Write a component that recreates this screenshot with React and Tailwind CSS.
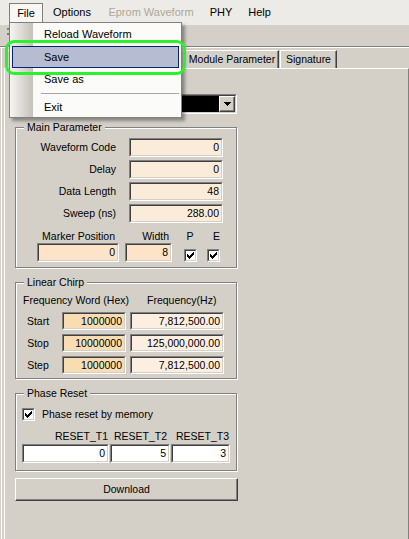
import React from "react";

function Field({ className = "", bg = "bg-white", children }) {
  return (
    <div className={`border border-t-[#808080] border-l-[#808080] border-b-white border-r-white ${className}`}>
      <div className={`h-full border border-t-[#404040] border-l-[#404040] border-b-[#d4d0c8] border-r-[#d4d0c8] ${bg} flex items-center justify-end pr-[2px] text-[10.5px] leading-none`}>
        {children}
      </div>
    </div>
  );
}

function Check({ className = "" }) {
  return (
    <div className={`w-[13px] h-[13px] border border-t-[#808080] border-l-[#808080] border-b-white border-r-white ${className}`}>
      <div className="w-full h-full border border-t-[#404040] border-l-[#404040] border-b-[#d4d0c8] border-r-[#d4d0c8] bg-white flex items-center justify-center">
        <svg width="7" height="7" viewBox="0 0 7 7" shapeRendering="crispEdges">
          <path
            d="M6 0h1v1h-1z M5 1h2v1h-2z M0 2h1v1h-1z M4 2h3v1h-3z M0 3h2v1h-2z M3 3h3v1h-3z M0 4h5v1h-5z M1 5h3v1h-3z M2 6h1v1h-1z"
            fill="#000"
          />
        </svg>
      </div>
    </div>
  );
}

function Group({ title, className = "", children }) {
  return (
    <fieldset className={`w-[222px] border border-[#808080] shadow-[1px_1px_0_#fff,inset_1px_1px_0_#fff] ${className}`}>
      <legend className="ml-[8px] px-[3px] bg-[#d4d0c8] text-[10.5px] leading-[13px]">{title}</legend>
      {children}
    </fieldset>
  );
}

function Row({ label, value }) {
  return (
    <div className="flex items-center">
      <div className="w-[100px] text-right text-[10.5px] leading-[13px]">{label}</div>
      <Field className="ml-[13px] w-[94px] h-[19px]" bg="bg-[#fbecda]">
        {value}
      </Field>
    </div>
  );
}

function ChirpRow({ label, hex, hz }) {
  return (
    <div className="flex items-center">
      <div className="w-[44px] text-center text-[10.5px] leading-[13px]">{label}</div>
      <Field className="ml-[2px] w-[64px] h-[18px]" bg="bg-[#f8ddb3]">
        {hex}
      </Field>
      <Field className="ml-[4px] w-[94px] h-[18px]" bg="bg-[#fcefe2]">
        {hz}
      </Field>
    </div>
  );
}

export default function App() {
  return (
    <div className="w-[409px] h-[539px] bg-[#d4d0c8] relative overflow-hidden flex flex-col font-[Liberation_Sans,Arial,sans-serif] text-black">
      {/* Menu bar */}
      <div className="h-[25px] shrink-0 bg-[#ecebe7] flex items-start pl-[9px] pt-[3px] text-[11px]">
        <div className="w-[34px] h-[19px] flex items-center justify-center border border-b-0 border-[#808080] bg-[#f8f7f4]">File</div>
        <div className="w-[58px] h-[19px] flex items-center justify-center">Options</div>
        <div className="w-[100px] h-[19px] flex items-center justify-center text-[#aca899]">Eprom Waveform</div>
        <div className="w-[40px] h-[19px] flex items-center justify-center">PHY</div>
        <div className="w-[37px] h-[19px] flex items-center justify-center">Help</div>
      </div>

      {/* Toolbar row */}
      <div className="h-[23px] shrink-0 border-b border-white shadow-[inset_0_-1px_0_#808080] flex flex-col pl-[7px] pt-[3px] gap-[3px]">
        <div className="w-[2px] h-[2px] bg-[#808080]" />
        <div className="w-[2px] h-[2px] bg-[#808080]" />
      </div>

      {/* Tab area */}
      <div className="flex-1 flex flex-col border-l border-white ml-[1px]">
        <div className="h-[20px] shrink-0 flex items-end pl-[3px] text-[10.5px]">
          <div className="w-[180px] h-[18px] border-t border-l border-white border-r border-r-[#404040] shadow-[inset_-1px_0_0_#808080]" />
          <div className="w-[94px] h-[18px] border-t border-l border-white border-r border-r-[#404040] shadow-[inset_-1px_0_0_#808080] flex items-center justify-center">
            Module Parameter
          </div>
          <div className="ml-[1px] w-[57px] h-[18px] border-t border-l border-white border-r border-r-[#404040] shadow-[inset_-1px_0_0_#808080] flex items-center justify-center">
            Signature
          </div>
        </div>

        {/* Tab panel */}
        <div className="flex-1 ml-[2px] border-l border-t border-white border-r border-r-[#808080] pl-[10px] pt-[25px] flex flex-col items-start">
          {/* Combo */}
          <div className="w-[222px] h-[20px] border border-t-[#808080] border-l-[#808080] border-b-white border-r-white">
            <div className="h-full border border-t-[#404040] border-l-[#404040] border-b-[#d4d0c8] border-r-[#d4d0c8] bg-black flex justify-end">
              <div className="w-[16px] h-full bg-[#d4d0c8] border border-t-white border-l-white border-b-[#404040] border-r-[#404040] shadow-[inset_-1px_-1px_0_#808080] flex items-center justify-center">
                <svg width="7" height="4" viewBox="0 0 7 4" shapeRendering="crispEdges">
                  <path d="M0 0h7v1h-7z M1 1h5v1h-5z M2 2h3v1h-3z M3 3h1v1h-1z" fill="#000" />
                </svg>
              </div>
            </div>
          </div>

          {/* Main Parameter */}
          <Group title="Main Parameter" className="mt-[7px] pt-[4px] pb-[5px]">
            <div className="flex flex-col gap-[3px]">
              <Row label="Waveform Code" value="0" />
              <Row label="Delay" value="0" />
              <Row label="Data Length" value="48" />
              <Row label="Sweep (ns)" value="288.00" />
            </div>
            <div className="mt-[7px] flex text-[10.5px] leading-[13px]">
              <div className="ml-[21px] w-[82px] flex flex-col">
                <div className="h-[13px] text-right pr-[4px]">Marker Position</div>
                <Field className="w-[82px] h-[19px]" bg="bg-[#fde4c8]">0</Field>
              </div>
              <div className="ml-[6px] w-[47px] flex flex-col">
                <div className="h-[13px] text-right pr-[3px]">Width</div>
                <Field className="w-[47px] h-[19px]" bg="bg-[#fde4c8]">8</Field>
              </div>
              <div className="ml-[6px] w-[24px] flex flex-col items-center">
                <div className="h-[13px]">P</div>
                <div className="h-[19px] flex items-end">
                  <Check />
                </div>
              </div>
              <div className="ml-[5px] w-[13px] flex flex-col">
                <div className="h-[13px] text-right">E</div>
                <div className="h-[19px] flex items-end">
                  <Check />
                </div>
              </div>
            </div>
          </Group>

          {/* Linear Chirp */}
          <Group title="Linear Chirp" className="mt-[8px] pt-[5px] pb-[4px]">
            <div className="h-[13px] flex text-[10.5px] leading-[13px]">
              <div className="ml-[7px]">Frequency Word (Hex)</div>
              <div className="ml-[18px]">Frequency(Hz)</div>
            </div>
            <div className="mt-[5px] flex flex-col gap-[4px]">
              <ChirpRow label="Start" hex="1000000" hz="7,812,500.00" />
              <ChirpRow label="Stop" hex="10000000" hz="125,000,000.00" />
              <ChirpRow label="Step" hex="1000000" hz="7,812,500.00" />
            </div>
          </Group>

          {/* Phase Reset */}
          <Group title="Phase Reset" className="mt-[8px] pt-[8px] pb-[7px]">
            <div className="h-[13px] flex items-center ml-[6px]">
              <Check />
              <span className="ml-[7px] text-[10.5px] leading-[13px]">Phase reset by memory</span>
            </div>
            <div className="mt-[9px] flex text-[10.5px] leading-[13px]">
              <div className="ml-[6px] w-[87px] flex flex-col">
                <div className="h-[13px] text-right pr-[1px]">RESET_T1</div>
                <Field className="mt-[1px] w-[87px] h-[19px]">0</Field>
              </div>
              <div className="ml-[1px] w-[60px] flex flex-col">
                <div className="h-[13px] text-right pr-[3px]">RESET_T2</div>
                <Field className="mt-[1px] w-[60px] h-[19px]">5</Field>
              </div>
              <div className="ml-[1px] w-[59px] flex flex-col">
                <div className="h-[13px] text-right pr-[1px]">RESET_T3</div>
                <Field className="mt-[1px] w-[59px] h-[19px]">3</Field>
              </div>
            </div>
          </Group>

          {/* Download */}
          <div className="mt-[7px] w-[223px] h-[23px] border border-t-white border-l-white border-b-[#404040] border-r-[#404040] shadow-[inset_-1px_-1px_0_#808080] flex items-center justify-center text-[10.5px]">
            Download
          </div>
        </div>
      </div>

      {/* File dropdown menu */}
      <div className="absolute left-[9px] top-[22px] w-[173px] h-[96px] border border-[#808080] bg-[linear-gradient(to_right,#f6f5f2_0px,#c4c1b8_23px,#fbfbf9_23px)] shadow-[3px_3px_3px_rgba(0,0,0,0.35)] flex flex-col text-[11px]">
        <div className="h-[23px] flex items-center pl-[34px]">Reload Waveform</div>
        <div className="mx-[2px] h-[22px] border border-[#0a246a] bg-[#b6bdd2] flex items-center pl-[31px]">Save</div>
        <div className="h-[22px] flex items-center pl-[34px]">Save as</div>
        <div className="h-[7px] pt-[3px] pl-[31px] pr-[2px]">
          <div className="h-[1px] bg-[#a7a6aa]" />
        </div>
        <div className="h-[20px] flex items-center pl-[34px]">Exit</div>
      </div>

      {/* Green highlight ring */}
      <div className="absolute left-[5px] top-[40px] w-[181px] h-[35px] rounded-[9px] border-[3px] border-[#2cf22c]" />
    </div>
  );
}
